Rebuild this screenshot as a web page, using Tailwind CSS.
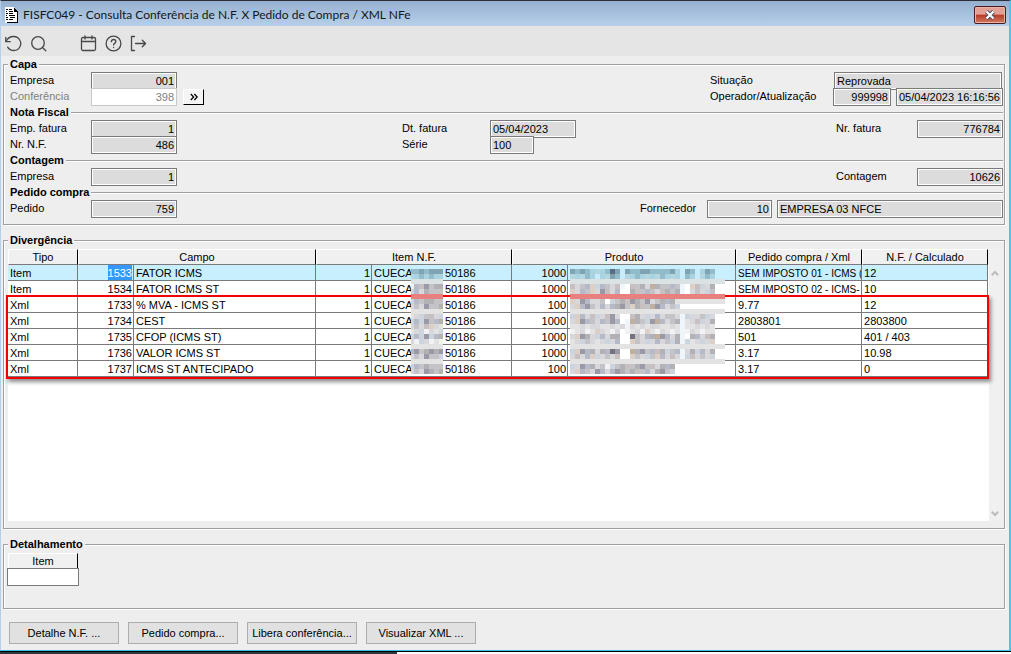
<!DOCTYPE html>
<html lang="pt-BR">
<head>
  <meta charset="UTF-8" />
  <title>FISFC049 - Consulta Conferência de N.F. X Pedido de Compra / XML NFe</title>
  <script src="https://cdn.jsdelivr.net/npm/@tailwindcss/browser@4"></script>
</head>
<body class="h-screen flex flex-col overflow-hidden bg-white font-['Liberation_Sans',Arial,sans-serif] text-[11px] leading-4 text-black">
  <div class="flex-1 min-h-0 flex flex-col bg-[#eeeeee] border-t border-t-[#2c2f38] border-l border-l-[#b4cfee] border-r-2 border-r-[#45c8ea] border-b border-b-[#35bfe6]">

    <!-- Barra de título -->
    <header class="h-[25px] flex items-center justify-between pt-0.5 pl-1 pr-[3px] bg-linear-to-b from-[#95b0cf] to-[#b8cfe9]">
      <div class="flex items-center gap-1">
        <svg class="w-3.5 h-4" viewBox="0 0 14 16" shape-rendering="crispEdges">
          <path d="M0 0h9v1h1v1h1v1h1v13H0z" fill="#fff" />
          <path d="M9 1h1v1h1v1h1v1h1v12H2v-1h10V5H9z" fill="#000" />
          <path d="M1 2h2v1H1zM4 2h3v1H4zM1 4h1v1H1zM4 4h4v1H4zM1 6h2v1H1zM4 6h4v1H4zM1 8h1v1H1zM4 8h6v1H4zM1 10h2v1H1zM5 10h5v1H5zM1 12h2v1H1zM4 12h4v1H4z" fill="#000" />
        </svg>
        <h1 class="font-[Lato,'Open_Sans',sans-serif] text-xs text-[#101820]">FISFC049 - Consulta Conferência de N.F. X Pedido de Compra / XML NFe</h1>
      </div>
      <button type="button" aria-label="Fechar" class="w-8 h-[18px] flex items-center justify-center rounded-xs border border-[#4b1a1f] bg-linear-to-b from-[#e3a095] from-45% via-[#b83a28] via-50% to-[#d1775f] shadow-[inset_0_0_0_1px_#e9b5aa]">
        <svg class="w-3 h-2.5" viewBox="0 0 12 10">
          <path d="M2.500 1.500l7 7M9.500 1.500l-7 7" stroke="#4a4f60" stroke-width="4" />
          <path d="M2.500 1.500l7 7M9.500 1.500l-7 7" stroke="#fff" stroke-width="2.200" />
        </svg>
      </button>
    </header>

    <!-- Ferramentas -->
    <nav class="h-[30px] flex items-center pl-1 pt-1 gap-2 bg-[#e5e5e5] text-[#484848]">
      <button type="button" aria-label="Atualizar">
        <svg class="w-[17px] h-[17px]" viewBox="0 0 17 17" fill="none" stroke="currentColor" stroke-width="1.300" stroke-linecap="round" stroke-linejoin="round">
          <path d="M.8 2.300v4.400h4.400" />
          <path d="M1 6.500C2.500 3.200 5.200 1.500 8.700 1.500a7 7 0 1 1-6 10.600" />
        </svg>
      </button>
      <button type="button" aria-label="Pesquisar">
        <svg class="w-[17px] h-[17px]" viewBox="0 0 17 17" fill="none" stroke="currentColor" stroke-width="1.300" stroke-linecap="round">
          <circle cx="8" cy="8" r="6.300" />
          <path d="M12.500 12.500l3.300 3.300" />
        </svg>
      </button>
      <button type="button" aria-label="Calendário" class="ml-[25px]">
        <svg class="w-[17px] h-[17px]" viewBox="0 0 17 17" fill="none" stroke="currentColor" stroke-width="1.300" stroke-linecap="round">
          <rect x="1.500" y="2.500" width="14" height="13" rx="1.500" />
          <path d="M1.500 6.500h14M5 .8v3.200M12 .8v3.200" />
        </svg>
      </button>
      <button type="button" aria-label="Ajuda">
        <svg class="w-[17px] h-[17px]" viewBox="0 0 17 17" fill="none" stroke="currentColor" stroke-width="1.300" stroke-linecap="round">
          <circle cx="8.500" cy="8.500" r="7.400" />
          <path d="M6.300 6.700c0-3 4.500-2.900 4.500-.1 0 1.700-2.200 1.800-2.200 3.300M8.600 12.400v.2" />
        </svg>
      </button>
      <button type="button" aria-label="Sair">
        <svg class="w-[17px] h-[17px]" viewBox="0 0 17 17" fill="none" stroke="currentColor" stroke-width="1.300" stroke-linecap="round" stroke-linejoin="round">
          <path d="M4.500 1.500H1.500v14h3M5.500 8.500h10M12.300 5.200l3.300 3.300-3.300 3.300" />
        </svg>
      </button>
    </nav>

    <main class="flex-1 min-h-0 flex flex-col gap-[7px] pl-0.5 pr-1">

      <fieldset class="border border-[#a0a0a0] shadow-[1px_1px_0_#fff,inset_1px_1px_0_#fff] pl-1.5 pr-px pb-2">
        <legend class="h-4 -ml-0.5 px-0.5 bg-[#eeeeee] font-bold">Capa</legend>

        <div class="flex h-4">
          <label for="empresa" class="w-[81px]">Empresa</label>
          <input id="empresa" value="001" readonly class="w-[86px] h-[18px] px-0.5 text-right bg-[#dcdcdc] border border-[#7a7a7a] shadow-[inset_0_0_0_1px_#fff]" />
          <label for="situacao" class="w-[124px] ml-auto">Situação</label>
          <input id="situacao" value="Reprovada" readonly class="w-[168px] h-[18px] px-0.5 mr-px bg-[#dcdcdc] border border-[#7a7a7a] shadow-[inset_0_0_0_1px_#fff]" />
        </div>
        <div class="flex h-4">
          <label for="conferencia" class="w-[81px] text-[#808080]">Conferência</label>
          <input id="conferencia" value="398" readonly class="w-[86px] h-[18px] px-0.5 text-right text-[#808080] bg-white border border-[#c8c8c8]" />
          <button type="button" aria-label="Avançar" class="w-[21px] h-4 ml-1.5 mt-px flex items-center justify-center bg-[#f4f4f4] border border-t-white border-l-white border-r-black border-b-black">
            <svg class="w-2 h-2" viewBox="0 0 8 8" fill="none" stroke="#000" stroke-width="1.300"><path d="M.8 1L3.600 4 .8 7M4.400 1l2.800 3-2.800 3" /></svg>
          </button>
          <label for="operador" class="w-[123px] ml-auto">Operador/Atualização</label>
          <input id="operador" value="999998" readonly class="w-[58px] h-[18px] px-0.5 text-right bg-[#dcdcdc] border border-[#7a7a7a] shadow-[inset_0_0_0_1px_#fff]" />
          <input aria-label="Data da atualização" value="05/04/2023 16:16:56" readonly class="w-[107px] h-[18px] px-0.5 ml-[5px] bg-[#dcdcdc] border border-[#7a7a7a] shadow-[inset_0_0_0_1px_#fff]" />
        </div>

        <div class="flex h-4 items-center gap-0.5">
          <h2 class="font-bold">Nota Fiscal</h2>
          <div class="flex-1 h-0.5 mt-0.5 border-t border-t-[#a0a0a0] border-b border-b-white"></div>
        </div>
        <div class="flex h-4">
          <label for="empFatura" class="w-[81px]">Emp. fatura</label>
          <input id="empFatura" value="1" readonly class="w-[86px] h-[18px] px-0.5 text-right bg-[#dcdcdc] border border-[#7a7a7a] shadow-[inset_0_0_0_1px_#fff]" />
          <label for="dtFatura" class="w-[88px] ml-[225px]">Dt. fatura</label>
          <input id="dtFatura" value="05/04/2023" readonly class="w-[86px] h-[18px] px-0.5 bg-[#dcdcdc] border border-[#7a7a7a] shadow-[inset_0_0_0_1px_#fff]" />
          <label for="nrFatura" class="w-[81px] ml-auto">Nr. fatura</label>
          <input id="nrFatura" value="776784" readonly class="w-[86px] h-[18px] px-0.5 text-right bg-[#dcdcdc] border border-[#7a7a7a] shadow-[inset_0_0_0_1px_#fff]" />
        </div>
        <div class="flex h-4">
          <label for="nrNf" class="w-[81px]">Nr. N.F.</label>
          <input id="nrNf" value="486" readonly class="w-[86px] h-[18px] px-0.5 text-right bg-[#dcdcdc] border border-[#7a7a7a] shadow-[inset_0_0_0_1px_#fff]" />
          <label for="serie" class="w-[88px] ml-[225px]">Série</label>
          <input id="serie" value="100" readonly class="w-11 h-[18px] px-0.5 bg-[#dcdcdc] border border-[#7a7a7a] shadow-[inset_0_0_0_1px_#fff]" />
        </div>

        <div class="flex h-4 items-center gap-0.5">
          <h2 class="font-bold">Contagem</h2>
          <div class="flex-1 h-0.5 mt-0.5 border-t border-t-[#a0a0a0] border-b border-b-white"></div>
        </div>
        <div class="flex h-4">
          <label for="empContagem" class="w-[81px]">Empresa</label>
          <input id="empContagem" value="1" readonly class="w-[86px] h-[18px] px-0.5 text-right bg-[#dcdcdc] border border-[#7a7a7a] shadow-[inset_0_0_0_1px_#fff]" />
          <label for="contagem" class="w-[81px] ml-auto">Contagem</label>
          <input id="contagem" value="10626" readonly class="w-[86px] h-[18px] px-0.5 text-right bg-[#dcdcdc] border border-[#7a7a7a] shadow-[inset_0_0_0_1px_#fff]" />
        </div>

        <div class="flex h-4 items-center gap-0.5">
          <h2 class="font-bold">Pedido compra</h2>
          <div class="flex-1 h-0.5 mt-0.5 border-t border-t-[#a0a0a0] border-b border-b-white"></div>
        </div>
        <div class="flex h-4">
          <label for="pedido" class="w-[81px]">Pedido</label>
          <input id="pedido" value="759" readonly class="w-[86px] h-[18px] px-0.5 text-right bg-[#dcdcdc] border border-[#7a7a7a] shadow-[inset_0_0_0_1px_#fff]" />
          <label for="fornecedor" class="w-[67px] ml-auto">Fornecedor</label>
          <input id="fornecedor" value="10" readonly class="w-[65px] h-[18px] px-0.5 text-right bg-[#dcdcdc] border border-[#7a7a7a] shadow-[inset_0_0_0_1px_#fff]" />
          <input aria-label="Nome do fornecedor" value="EMPRESA 03 NFCE" readonly class="w-[226px] h-[18px] px-0.5 ml-[5px] bg-[#dcdcdc] border border-[#7a7a7a] shadow-[inset_0_0_0_1px_#fff]" />
        </div>
      </fieldset>

      <fieldset class="flex-1 min-h-0 flex flex-col border border-[#a0a0a0] shadow-[1px_1px_0_#fff,inset_1px_1px_0_#fff] pl-1 pr-px pt-px pb-[7px]">
        <legend class="h-4 px-0.5 bg-[#eeeeee] font-bold">Divergência</legend>
        <div class="flex-1 min-h-0 flex">
          <div class="flex-1 pr-px bg-[linear-gradient(#eeeeee_16px,#ffffff_16px)]">
            <div class="relative">
              <table class="w-full table-fixed border-collapse">
                <colgroup>
                  <col class="w-[70px]" /><col class="w-14" /><col class="w-[182px]" /><col class="w-14" /><col class="w-[140px]" />
                  <col class="w-14" /><col class="w-[168px]" /><col class="w-[126px]" /><col />
                </colgroup>
                <thead>
                  <tr class="h-4">
                    <th class="p-0 h-4 font-normal"><div class="h-4 bg-[#f0f0f0] border border-t-white border-l-white border-r-black border-b-[#7a7a7a] leading-[15px]">Tipo</div></th>
                    <th colspan="2" class="p-0 h-4 font-normal"><div class="h-4 bg-[#f0f0f0] border border-t-white border-l-white border-r-black border-b-[#7a7a7a] leading-[15px]">Campo</div></th>
                    <th colspan="2" class="p-0 h-4 font-normal"><div class="h-4 bg-[#f0f0f0] border border-t-white border-l-white border-r-black border-b-[#7a7a7a] leading-[15px]">Item N.F.</div></th>
                    <th colspan="2" class="p-0 h-4 font-normal"><div class="h-4 bg-[#f0f0f0] border border-t-white border-l-white border-r-black border-b-[#7a7a7a] leading-[15px]">Produto</div></th>
                    <th class="p-0 h-4 font-normal"><div class="h-4 bg-[#f0f0f0] border border-t-white border-l-white border-r-black border-b-[#7a7a7a] leading-[15px]">Pedido compra / Xml</div></th>
                    <th class="p-0 h-4 font-normal"><div class="h-4 bg-[#f0f0f0] border border-t-white border-l-white border-r-black border-b-[#7a7a7a] leading-[15px]">N.F. / Calculado</div></th>
                  </tr>
                </thead>
                <tbody id="divergencias"></tbody>
              </table>

              <!-- Destaque das divergências do XML -->
              <div class="absolute -left-0.5 -right-px top-[46px] h-[84px] border-2 border-[#f40000] shadow-[2px_3px_4px_rgba(0,0,0,0.45)]"></div>

              <!-- Descrições ocultas -->
              <svg id="mosaicoItem" class="absolute left-[403px] top-5 w-8 h-[105px]" viewBox="2 0 32 105" shape-rendering="crispEdges"></svg>
              <svg id="mosaicoProduto" class="absolute left-[562px] top-5 w-[155px] h-[105px]" viewBox="0 0 155 105" shape-rendering="crispEdges"></svg>
            </div>
          </div>
          <div class="w-3.5 flex flex-col justify-between items-center pt-[21px] pb-1 pr-0.5 bg-[#f0f0f0]">
            <svg class="w-2 h-[7px]" viewBox="0 0 8 7" fill="none" stroke="#bcbcbc" stroke-width="2"><path d="M.8 5.200L4 2l3.200 3.200" /></svg>
            <svg class="w-2 h-[7px]" viewBox="0 0 8 7" fill="none" stroke="#bcbcbc" stroke-width="2"><path d="M.8 1.800L4 5l3.200-3.200" /></svg>
          </div>
        </div>
      </fieldset>

      <fieldset class="border border-[#a0a0a0] shadow-[1px_1px_0_#fff,inset_1px_1px_0_#fff] pl-[3px] pt-px pb-[22px]">
        <legend class="h-4 ml-px px-0.5 bg-[#eeeeee] font-bold">Detalhamento</legend>
        <label for="item" class="block w-[70px] h-[15px] ml-px bg-[#f0f0f0] border border-b-0 border-t-white border-l-white border-r-black text-center leading-[14px]">Item</label>
        <input id="item" class="block w-[72px] h-[18px] px-0.5 bg-white border border-[#7a7a7a]" />
      </fieldset>

      <div class="flex gap-[9px] pl-1.5 py-1.5">
        <button type="button" class="w-[110px] h-[22px] bg-[#e1e1e1] border border-[#adadad]">Detalhe N.F. ...</button>
        <button type="button" class="w-[110px] h-[22px] bg-[#e1e1e1] border border-[#adadad]">Pedido compra...</button>
        <button type="button" class="w-[110px] h-[22px] bg-[#e1e1e1] border border-[#adadad]">Libera conferência...</button>
        <button type="button" class="w-[110px] h-[22px] bg-[#e1e1e1] border border-[#adadad]">Visualizar XML ...</button>
      </div>
    </main>
  </div>
  <div class="h-[3px] border-t border-black"><div class="w-[397px] h-0.5 bg-[#2d3639]"></div></div>

  <script>
    const linhas = [
      ['Item', '1533', 'FATOR ICMS', '1', '50186', '1000', 'SEM IMPOSTO 01 - ICMS (', '12'],
      ['Item', '1534', 'FATOR ICMS ST', '1', '50186', '1000', 'SEM IMPOSTO 02 - ICMS-', '10'],
      ['Xml', '1733', '% MVA - ICMS ST', '1', '50186', '100', '9.77', '12'],
      ['Xml', '1734', 'CEST', '1', '50186', '1000', '2803801', '2803800'],
      ['Xml', '1735', 'CFOP (ICMS ST)', '1', '50186', '1000', '501', '401 / 403'],
      ['Xml', '1736', 'VALOR ICMS ST', '1', '50186', '1000', '3.17', '10.98'],
      ['Xml', '1737', 'ICMS ST ANTECIPADO', '1', '50186', '100', '3.17', '0']
    ];

    const celula = (html, num) =>
      `<td class="p-0"><div class="h-4 pl-0.5 pr-px overflow-hidden whitespace-nowrap border-r border-b border-[#7a7a7a] ${num ? 'text-right' : ''}">${html}</div></td>`;

    document.getElementById('divergencias').innerHTML = linhas.map((l, i) => {
      const codigo = i === 0 ? `<span class="inline-block h-[15px] bg-[#3399ff] text-white">${l[1]}</span>` : l[1];
      // textos longos usam corpo menor para caber na coluna
      const pedido = l[6].length > 20 ? `<span class="text-[10px]">${l[6]}</span>` : l[6];
      return `<tr class="h-4 ${i === 0 ? 'bg-[#c8effe]' : 'bg-white'}">` +
        celula(l[0]) + celula(codigo, true) + celula(l[2]) + celula(l[3], true) +
        celula(`<span class="inline-block w-[71px]">CUECA</span>${l[4]}`) +
        celula(l[5], true) + celula('') + celula(pedido) + celula(l[7]) + '</tr>';
    }).join('');

    const cores = {
      a: '#c4c4c8', b: '#b2b2b6', c: '#9a9aa6', d: '#d8d8dc', e: '#e3e3e3', f: '#f2f2f4', w: '#ffffff',
      g: '#77727f', p: '#dcd0c6', k: '#c8bfc0', l: '#b6bac8', n: '#ccd4de', s: '#eef6fc', o: '#c0b0a0',
      0: '#c8ecfc', 1: '#a9d3e0', 2: '#93bccb', 3: '#7fa3b0', 4: '#5c6c86', 5: '#b4d6de',
      R: '#e98080', B: '#dae2e4'
    };

    function mosaico(id, mapa) {
      document.getElementById(id).innerHTML = mapa.map((linha, y) =>
        [...linha].map((c, x) => cores[c]
          ? `<rect x="${x * 5}" y="${y * 5}" width="5" height="5" fill="${cores[c]}"/>` : '').join('')
      ).join('');
    }

    mosaico('mosaicoItem', [
      '2232333', '5121211', 'BBBBBBB', 'flkcabb', 'nldbaaa', 'RRRRRRR', 'nlabbaa',
      'dadcaab', 'eeeeeee', 'ednakdn', 'nlncalb', 'dadkpde', 'ednfden', 'nlncnlb',
      'dfndfef', 'eeeeeee', 'lcabcbc', 'dadcaan', 'eeeeeee', 'nlabaaa', 'dadcbab'
    ]);
    mosaico('mosaicoProduto', [
      '32321512430322332222310320132..',
      '51521015320512151521510210521..',
      'BBBBBBBBBBBBBBBBBBBBBBBBBBBBBBB',
      'kdalpnladkswkabdobaalaswpkndb..',
      'pdlapdckdlwwbkaladkbabswdadna..',
      'RRRRRRRRRRRRRRRRRRRRRRRRRRRRRRR',
      'pdclddawnabkcbacdablbeeeeeeeeee',
      'dplcadldlbcapbkaocldan.........',
      'eeeeeeeeeeeeeeeeeeeeeeeeeeeeeee',
      'npldkndkcdwwkbdndldaadsnddand..',
      'dpcladlaclwsobancoldabsedkndb..',
      'eededdeededfdededdeedeseedede..',
      'fedfepdefdwfedfpefdefesfdefee..',
      'dpcbdnldbbwwgadlbocldbswbldkb..',
      'ednadedndlwwpadndldanbsnedndp..',
      'eeeeeeeeeeeeeeeeeeeeeeeeeeeeeee',
      'npclbdblgcwwobcalkbnalsdbnldb..',
      'dkdlpndadkwwpadnapldkdsnkdadn..',
      'eeeeeeeeeeeeeeeeeeeeeeeeeeeeeee',
      'ndclbdafnabkabcakdblb..........',
      'dpladcldlcbabkaldbcan..........'
    ]);
  </script>
</body>
</html>
